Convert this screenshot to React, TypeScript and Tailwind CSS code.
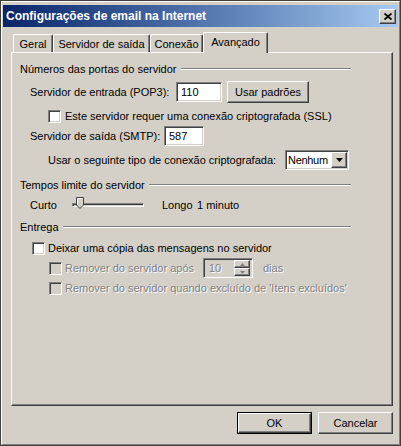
import React from 'react';

const raised =
  'border border-t-white border-l-white border-r-[#404040] border-b-[#404040] shadow-[inset_-1px_-1px_0_#808080]';
const sunken =
  'border border-t-[#808080] border-l-[#808080] border-r-white border-b-white shadow-[inset_1px_1px_0_#404040,inset_-1px_-1px_0_#d4d0c8]';

const disabledText = 'text-[#808080] [text-shadow:1px_1px_0_#ffffff]';

const Checkbox: React.FC<{ disabled?: boolean }> = ({ disabled }) => (
  <div className={`w-[13px] h-[13px] shrink-0 ${sunken} ${disabled ? 'bg-[#d4d0c8]' : 'bg-white'}`} />
);

const GroupHeader: React.FC<{ title: string }> = ({ title }) => (
  <div className="flex items-center h-[14px] w-[331px]">
    <span className="whitespace-nowrap">{title}</span>
    <div className="flex-1 ml-[4px] h-[2px] border-t border-t-[#808080] border-b border-b-white" />
  </div>
);

const Tab: React.FC<{ label: string; width: string; active?: boolean }> = ({ label, width, active }) => {
  if (active) {
    return (
      <div
        className={`${width} h-[21px] -mb-[1px] relative z-10 bg-[#d4d0c8] rounded-t-[2px] border-t border-l border-t-white border-l-white border-r border-r-[#404040] shadow-[inset_-1px_0_0_#808080] flex justify-center pt-[2px]`}
      >
        {label}
      </div>
    );
  }
  return (
    <div
      className={`${width} h-[18px] bg-[#d4d0c8] rounded-t-[2px] border-t border-l border-t-white border-l-white border-r border-r-[#404040] shadow-[inset_-1px_0_0_#808080] flex justify-center pt-[2px]`}
    >
      {label}
    </div>
  );
};

const Button: React.FC<{ label: string; isDefault?: boolean }> = ({ label, isDefault }) => (
  <div className={`w-[75px] h-[22px] ${isDefault ? 'border border-black' : ''}`}>
    <div className={`w-full h-full bg-[#d4d0c8] ${raised} flex items-center justify-center`}>{label}</div>
  </div>
);

const App: React.FC = () => {
  return (
    <div className="w-[401px] h-[446px] bg-[#d4d0c8] border border-[#404040] font-['Liberation_Sans',Arial,sans-serif] text-[11px] leading-[14px] text-black select-none">
      <div className="h-full flex flex-col border-t border-l border-t-white border-l-white border-r border-b border-r-[#808080] border-b-[#808080] px-[1px] pt-[3px]">
        {/* title bar */}
        <div className="h-[22px] shrink-0 flex items-center bg-linear-to-r from-[#0a246a] to-[#a6caf0] pl-[3px] pr-[2px]">
          <span className="flex-1 text-white font-bold text-[12px] whitespace-nowrap">
            Configurações de email na Internet
          </span>
          <div className={`w-[17px] h-[15px] bg-[#d4d0c8] ${raised} flex items-center justify-center`}>
            <svg width="8" height="7" viewBox="0 0 8 7">
              <path d="M0.5 0.5 L7.5 6.5 M7.5 0.5 L0.5 6.5" stroke="#000" strokeWidth="1.8" />
            </svg>
          </div>
        </div>

        <div className="flex-1 flex flex-col pl-[8px] pr-[5px] pt-[5px]">
          {/* tabs */}
          <div className="h-[20px] flex items-end pl-[2px]">
            <Tab label="Geral" width="w-[40px]" />
            <Tab label="Servidor de saída" width="w-[97px]" />
            <Tab label="Conexão" width="w-[53px]" />
            <Tab label="Avançado" width="w-[65px]" active />
          </div>

          {/* panel */}
          <div className="h-[354px] border-t border-l border-t-white border-l-white border-r border-b border-r-[#404040] border-b-[#404040] shadow-[inset_-1px_-1px_0_#808080] pl-[8px] pt-[9px]">
            <GroupHeader title="Números das portas do servidor" />

            <div className="mt-[5px] h-[22px] flex items-center pl-[10px]">
              <span className="w-[146px] whitespace-nowrap">Servidor de entrada (POP3):</span>
              <div className={`w-[46px] h-[20px] bg-white ${sunken} flex items-center pl-[4px]`}>110</div>
              <div className={`ml-[5px] w-[82px] h-[22px] bg-[#d4d0c8] ${raised} flex items-center justify-center`}>
                Usar padrões
              </div>
            </div>

            <div className="mt-[6px] h-[14px] flex items-center pl-[28px]">
              <Checkbox />
              <span className="ml-[4px] whitespace-nowrap">Este servidor requer uma conexão criptografada (SSL)</span>
            </div>

            <div className="mt-[3px] h-[20px] flex items-center pl-[10px]">
              <span className="w-[134px] whitespace-nowrap">Servidor de saída (SMTP):</span>
              <div className={`w-[40px] h-[20px] bg-white ${sunken} flex items-center pl-[4px]`}>587</div>
            </div>

            <div className="mt-[4px] h-[20px] flex items-center pl-[28px]">
              <span className="w-[237px] whitespace-nowrap">Usar o seguinte tipo de conexão criptografada:</span>
              <div className={`w-[64px] h-[20px] bg-white ${sunken} flex items-center pl-[2px] pr-[1px]`}>
                <span className="flex-1 tracking-[-0.3px] whitespace-nowrap">Nenhum</span>
                <div className={`w-[16px] h-[16px] shrink-0 bg-[#d4d0c8] ${raised} flex items-center justify-center`}>
                  <svg width="7" height="4" viewBox="0 0 7 4">
                    <path d="M0 0 H7 L3.5 4 Z" fill="#000" />
                  </svg>
                </div>
              </div>
            </div>

            <div className="mt-[8px]">
              <GroupHeader title="Tempos limite do servidor" />
            </div>

            <div className="mt-[4px] h-[18px] flex items-center pl-[10px]">
              <span className="w-[42px]">Curto</span>
              <div className="relative w-[72px] h-[18px] flex items-center">
                <div className="w-full h-[4px] border-t border-l border-t-[#808080] border-l-[#808080] border-b border-r border-b-white border-r-white shadow-[inset_1px_1px_0_#404040]" />
                <svg className="absolute left-[4px] top-[1px]" width="8" height="12" viewBox="0 0 8 12">
                  <path d="M0.5 0.5 H7.5 V8 L4 11.5 L0.5 8 Z" fill="#d4d0c8" stroke="#404040" />
                  <path d="M1.5 8 V1.5 H6.5" fill="none" stroke="#fff" />
                </svg>
              </div>
              <span className="ml-[18px] w-[35px]">Longo</span>
              <span className="whitespace-nowrap">1 minuto</span>
            </div>

            <div className="mt-[6px]">
              <GroupHeader title="Entrega" />
            </div>

            <div className="mt-[7px] h-[14px] flex items-center pl-[12px]">
              <Checkbox />
              <span className="ml-[3px] whitespace-nowrap">Deixar uma cópia das mensagens no servidor</span>
            </div>

            <div className="mt-[3px] h-[20px] flex items-center pl-[29px]">
              <Checkbox disabled />
              <span className={`ml-[3px] w-[138px] whitespace-nowrap ${disabledText}`}>Remover do servidor após</span>
              <div className={`w-[50px] h-[20px] bg-[#d4d0c8] ${sunken} flex items-center pl-[5px] pr-[2px]`}>
                <span className={`flex-1 ${disabledText}`}>10</span>
                <div className="w-[16px] h-[16px] flex flex-col">
                  <div className={`h-[8px] bg-[#d4d0c8] ${raised} flex items-center justify-center`}>
                    <svg width="5" height="3" viewBox="0 0 5 3">
                      <path d="M0 3 H5 L2.5 0 Z" fill="#808080" />
                    </svg>
                  </div>
                  <div className={`h-[8px] bg-[#d4d0c8] ${raised} flex items-center justify-center`}>
                    <svg width="5" height="3" viewBox="0 0 5 3">
                      <path d="M0 0 H5 L2.5 3 Z" fill="#808080" />
                    </svg>
                  </div>
                </div>
              </div>
              <span className={`ml-[10px] ${disabledText}`}>dias</span>
            </div>

            <div className="mt-[3px] h-[14px] flex items-center pl-[29px]">
              <Checkbox disabled />
              <span className={`ml-[3px] whitespace-nowrap ${disabledText}`}>
                Remover do servidor quando excluído de 'Itens excluídos'
              </span>
            </div>
          </div>

          {/* buttons */}
          <div className="mt-[6px] flex justify-end gap-[6px]">
            <Button label="OK" isDefault />
            <Button label="Cancelar" />
          </div>
        </div>
      </div>
    </div>
  );
};

export default App;
